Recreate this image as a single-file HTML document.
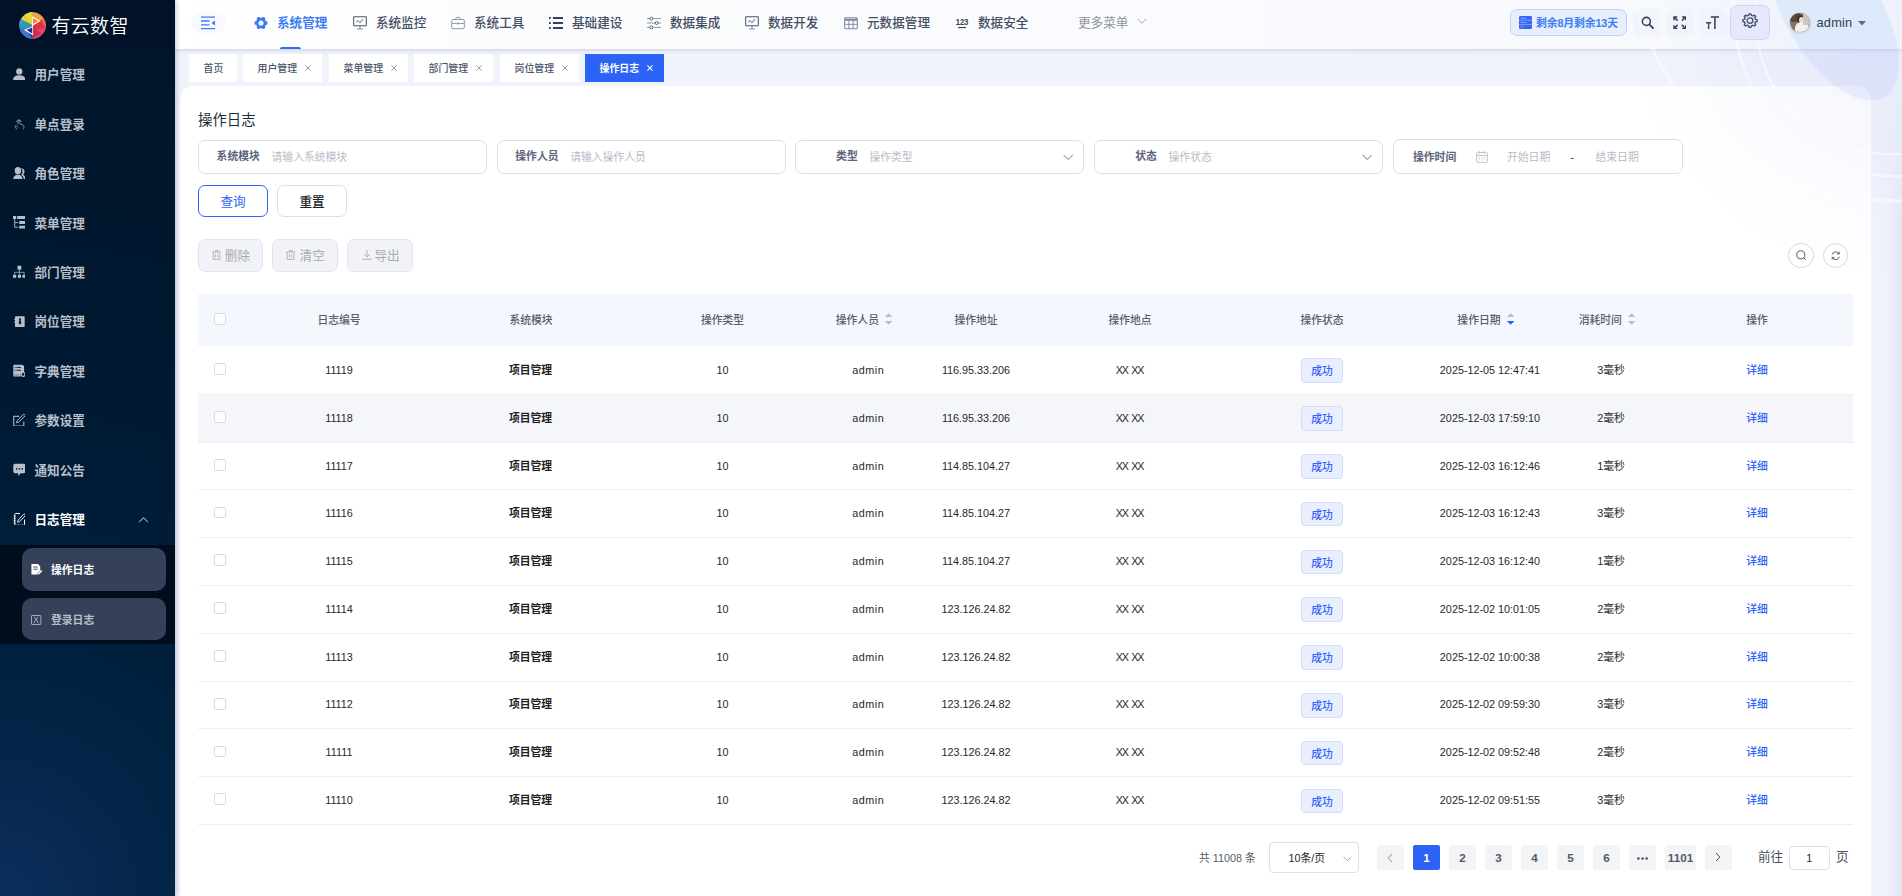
<!DOCTYPE html>
<html lang="zh-CN"><head><meta charset="utf-8"><title>操作日志</title><style>
*{box-sizing:border-box;margin:0;padding:0}
html,body{width:1902px;height:896px;overflow:hidden}
body{font-family:"Liberation Sans","Noto Sans CJK SC",sans-serif;font-size:10.8px;color:#303133;background:#f0f3fb;position:relative;-webkit-font-smoothing:antialiased}
.abs{position:absolute}
#side{position:absolute;left:0;top:0;width:175px;height:896px;background:radial-gradient(circle farthest-corner at 0% 100%,#0b2e5d 0%,#042547 18%,#001f3d 30%,#001a33 55%,#00162c 85%,#00152a 100%);box-shadow:1px 0 5px rgba(0,21,41,.25);z-index:5}
#logo{position:absolute;left:0;top:0;width:175px;height:49px;background:#011228}
#logo .t{position:absolute;left:51.5px;top:12.3px;font-size:19px;line-height:30px;font-weight:350;color:#fff;letter-spacing:.3px;white-space:nowrap}
.mi{position:absolute;left:0;width:175px;height:49.44px;line-height:49.44px;color:#b7bfca;font-weight:700;font-size:12.6px;white-space:nowrap}
.mi span{position:absolute;left:34.5px;top:0}
.mi svg{position:absolute;left:12.8px;top:16.5px;width:12.6px;height:12.6px}
.mi.on{color:#fff}
#sub{position:absolute;left:0;top:544.5px;width:175px;height:99px;background:#000d1c}
.si{position:absolute;left:22px;width:144px;height:42px;border-radius:10px;background:#344158;color:#b7bfca;font-weight:700;font-size:10.8px;line-height:42px}
.si span{position:absolute;left:29px;top:0}
.si svg{position:absolute;left:8.2px;top:14.6px;width:12px;height:12px}
.si.on{color:#fff}
#topbg{position:absolute;left:175px;top:0;width:1727px;height:49px;background:linear-gradient(90deg,#fff 0%,#fbfcfe 20%,#f8f9fd 100%);box-shadow:0 1px 4px rgba(120,135,170,.35)}
#top{position:absolute;left:175px;top:0;width:1727px;height:49px}
.ni{position:absolute;top:0;height:49px;line-height:46px;font-size:12.6px;font-weight:500;color:#434e64;white-space:nowrap}
.ni svg{position:absolute;left:0;top:16px;width:14px;height:14px}
.ni span{position:absolute;left:23px;top:0}
#tags{position:absolute;left:175px;top:49px;width:1727px;height:37px}
.tag{position:absolute;top:5px;height:28px;background:#fff;font-size:9.9px;line-height:30.5px;color:#4b5467;font-weight:500;white-space:nowrap}
.tag span{position:absolute;top:0}
.tag i{position:absolute;top:-1.2px;font-style:normal;font-weight:400;font-size:10px;color:#8a909c}
.tag.on{background:#2d62f7;color:#fff;font-weight:700}
.tag.on i{color:#fff}
#card{position:absolute;left:180px;top:86px;width:1691px;height:820px;background:#fff;border-radius:14px 14px 0 0}
#ttl{position:absolute;left:198px;top:109px;font-size:14.4px;line-height:22px;color:#1f2a3a;font-weight:400}
.inp{position:absolute;top:140px;width:289px;height:34px;border:1px solid #dcdfea;border-radius:7px;background:#fff}
.inp b{position:absolute;top:0;line-height:31px;font-size:10.8px;color:#5d647c;font-weight:700;white-space:nowrap}
.inp em{position:absolute;top:0;left:72.4px;line-height:33.2px;font-size:10.8px;color:#b8bcc6;font-style:normal;white-space:nowrap}
.btn{position:absolute;border-radius:7px;text-align:center;font-size:12.6px;white-space:nowrap}
.dis{position:absolute;top:239.3px;height:32.4px;border:1px solid #e3e5ee;background:#f2f3f8;border-radius:7px;color:#a6a9b3;font-size:12.6px;line-height:33.4px;white-space:nowrap}
.circ{position:absolute;top:242.6px;width:25.6px;height:25.6px;border-radius:50%;border:1px solid #d7d9e2;background:#fff}
#thead{position:absolute;left:198px;top:294px;width:1655px;height:52.3px;background:#f4f7fe}
.th{position:absolute;top:294.5px;height:52.5px;line-height:50.6px;font-size:10.8px;font-weight:500;color:#585d69;white-space:nowrap;transform:translateX(-50%)}
.row{position:absolute;left:198px;width:1655px;height:47.8px;border-bottom:1px solid #eceff5}
.row.hv{background:#f5f6fa}
.td{position:absolute;height:47.78px;line-height:46.5px;font-size:10.8px;color:#25282e;white-space:nowrap;transform:translateX(-50%)}
.td.b{font-weight:700;color:#1d2026}
.td.l{color:#2d62f7;font-weight:500}
.cb{position:absolute;left:214.1px;width:11.8px;height:11.8px;border:1px solid #d9dce6;border-radius:2px;background:#fff}
.ok{position:absolute;left:1301px;width:42px;height:24.5px;border:1px solid #d2dcfd;border-radius:4px;background:#eaeffe;color:#2f63f9;font-weight:500;font-size:10.8px;line-height:25.2px;text-align:center}
.pg{position:absolute;top:845px;height:25px;min-width:27px;background:#f3f4f6;border-radius:2px;text-align:center;line-height:25px;font-size:11.7px;font-weight:700;color:#555963}
.pg.on{background:#2d62f7;color:#fff;font-weight:700}
</style></head><body>
<div id="card"></div>
<div class="abs" style="left:1880px;top:49px;width:22px;height:847px;background:linear-gradient(90deg,rgba(205,210,228,0) 0,rgba(205,210,225,.08) 45%,rgba(203,207,222,.40) 100%);-webkit-mask-image:linear-gradient(180deg,transparent 30px,#000 220px);mask-image:linear-gradient(180deg,transparent 30px,#000 220px)"></div>
<div id="topbg"></div>
<div class="abs" style="left:1480px;top:0;width:422px;height:420px;overflow:hidden;pointer-events:none"><div class="abs" style="left:142px;top:-280px;width:560px;height:560px;border-radius:50%;background:radial-gradient(closest-side,rgba(200,212,250,.20) 0,rgba(200,212,250,.15) 50%,rgba(205,215,250,.05) 80%,rgba(205,215,250,0) 100%)"></div><div class="abs" style="left:275.0px;top:-115.0px;width:270.0px;height:270.0px;border-radius:50%;border:2.5px solid rgba(255,255,255,0.55)"></div><div class="abs" style="left:252.0px;top:-158.0px;width:336.0px;height:336.0px;border-radius:50%;border:3.0px solid rgba(255,255,255,0.45)"></div><div class="abs" style="left:147.0px;top:-323.0px;width:526.0px;height:526.0px;border-radius:50%;border:4.0px solid rgba(255,255,255,0.40)"></div></div>
<div class="abs" style="left:1480px;top:0;width:422px;height:49px;overflow:hidden;pointer-events:none"><div class="abs" style="left:255.8px;top:-34.4px;width:196px;height:95px;border-radius:50%;transform:rotate(58.800deg);background:rgba(150,200,250,.20)"></div></div>
<div class="abs" style="left:1480px;top:49px;width:422px;height:300px;overflow:hidden;pointer-events:none"><div class="abs" style="left:255.8px;top:-83.4px;width:196px;height:95px;border-radius:50%;transform:rotate(58.800deg);background:rgba(170,180,250,.19)"></div></div>
<div id="side">
<div id="logo">
<svg class="abs" style="left:19px;top:12px;width:27px;height:27px" viewBox="0 0 54 54">
<defs><clipPath id="lc"><circle cx="27" cy="27" r="26.500"/></clipPath></defs>
<g clip-path="url(#lc)">
<rect width="54" height="54" fill="#3f76c9"/>
<path d="M0 0h27v27L2 14z" fill="#e3cf3d"/>
<path d="M8 0h19v24z" fill="#ecd93f"/>
<path d="M0 13l27 13-12 8L0 30z" fill="#2f9ba8"/>
<path d="M0 12l10 5-9 9z" fill="#3e9fe0"/>
<path d="M0 30l15 4 12 20H8z" fill="#4277c8"/>
<path d="M14 34l13-7v27z" fill="#25379a"/>
<path d="M27 0h27v20L27 22z" fill="#f2a33b"/>
<path d="M27 0h12l15 14V0z" fill="#f4b94c"/>
<path d="M27 20l27-6v22L27 40z" fill="#e2333c"/>
<path d="M44 14l10 0v22z" fill="#ee5f5a"/>
<path d="M27 36l27-4v22H27z" fill="#e8456a"/>
<path d="M27 30l17 12-17 12z" fill="#c92e55"/>
</g>
<path d="M27 9v37" stroke="#fff" stroke-width="2.200" fill="none"/>
<path d="M27.500 10.500l13.500 7.500-13 7.500" stroke="#fff" stroke-width="2.400" fill="#ea8a1f" stroke-linejoin="miter"/>
<path d="M26.500 29.500l-14 6.500 14 8.500" stroke="#fff" stroke-width="2.400" fill="#1b2a8f" stroke-linejoin="miter"/>
</svg>
<div class="t">有云数智</div>
</div>
<div class="mi" style="top:51.20px"><svg viewBox="0 0 12.6 12.6" style="" ><ellipse cx="6.300" cy="3.400" rx="3.100" ry="3.200" fill="currentColor"/><path d="M.1 12.300c0-3.600 2.600-5 6.200-5s6.200 1.400 6.200 5z" fill="currentColor"/></svg><span>用户管理</span></div>
<div class="mi" style="top:100.64px"><svg viewBox="0 0 12.6 12.6" style="" ><g opacity=".75"><path d="M5 7.500V3.600a.9.900 0 011.800 0v3.200l3.300 1.300c.8.300 1 .8.900 1.500l-.5 2.700M3.600 12.300L2.100 9.400c-.3-.8.700-1.300 1.300-.7L5 10.300" fill="none" stroke="currentColor" stroke-width=".9"/><path d="M3.400 5a2.600 2.600 0 015 0" fill="none" stroke="currentColor" stroke-width=".9"/></g></svg><span>单点登录</span></div>
<div class="mi" style="top:150.08px"><svg viewBox="0 0 12.6 12.6" style="" ><ellipse cx="4.900" cy="3.700" rx="3.200" ry="3.600" fill="currentColor"/><path d="M.2 12.200c.2-2.400 1.500-3.700 3.200-4.400h3c1.700.7 3 2 3.200 4.400z" fill="currentColor"/><path d="M8 1.300c2.200.1 3.500 1.500 3.500 3.500 0 1.300-.6 2.300-1.400 2.900 1.500.8 2.400 2.300 2.500 4.500h-1.800c-.2-2-1.100-3.300-2.700-4.100.9-.9 1.400-1.900 1.400-3.300 0-1.400-.5-2.600-1.500-3.500z" fill="currentColor"/></svg><span>角色管理</span></div>
<div class="mi" style="top:199.52px"><svg viewBox="0 0 12.6 12.6" style="" ><path d="M0 .1h3.200v2.800H0zM4.200.1h8.500v2.800H4.200zM6.200 5.100h6.500v2.900H6.200zM6.200 9.700h6.500v2.900H6.200z" fill="currentColor"/><path d="M1.700 2.900v8.400h3.500M1.700 6.600h3.500" fill="none" stroke="currentColor" stroke-width=".9"/></svg><span>菜单管理</span></div>
<div class="mi" style="top:248.96px"><svg viewBox="0 0 12.6 12.6" style="" ><path d="M4.500.8h3.800v3.900H4.500zM0 9.700h3.200v3H0zM4.900 9.700h3.200v3H4.900zM9.500 9.700h3.200v3H9.500z" fill="currentColor"/><path d="M6.400 4.700v5M1.600 9.700V7.300h9.500v2.400" fill="none" stroke="currentColor" stroke-width=".9" opacity=".8"/></svg><span>部门管理</span></div>
<div class="mi" style="top:298.40px"><svg viewBox="0 0 12.6 12.6" style="" ><rect x="2" y="1.300" width="9.700" height="10.700" rx=".8" fill="currentColor"/><path d="M1 4.600h1.500M1 7.200h1.500" stroke="currentColor" stroke-width=".9"/><path d="M6.200 3.200h1.600l.3 1-.5.800.8 3-1.400 1.800L5.600 8l.8-3-.5-.8z" fill="#001a36"/></svg><span>岗位管理</span></div>
<div class="mi" style="top:347.84px"><svg viewBox="0 0 12.6 12.6" style="" ><path d="M.3 1.600a.8.800 0 01.8-.8h8.200l1.800 1.200v6a3.300 3.300 0 00-3.300 4.600H1.100a.8.800 0 01-.8-.8z" fill="currentColor"/><path d="M1.500 3.400h1M3.400 3.400h4.600M1.500 6.200h1M3.400 6.200h4.600" stroke="#0b2444" stroke-width="1"/><path d="M1.500 11h5" stroke="#5b6b80" stroke-width=".8"/><circle cx="10.100" cy="10.400" r="1.900" fill="none" stroke="currentColor" stroke-width="1.200"/></svg><span>字典管理</span></div>
<div class="mi" style="top:397.28px"><svg viewBox="0 0 12.6 12.6" style="" ><path d="M10.800 7.500v4.700H.7V2.300h5.600" fill="none" stroke="currentColor" stroke-width="1.200" opacity=".85"/><path d="M3.500 8.600l.7-2L10.300.5a1.100 1.100 0 011.700 1.500L5.700 8.100z" fill="none" stroke="currentColor" stroke-width="1"/></svg><span>参数设置</span></div>
<div class="mi" style="top:446.72px"><svg viewBox="0 0 12.6 12.6" style="" ><path d="M2 .8h8.800A1.700 1.700 0 0112.500 2.500v6A1.700 1.700 0 0110.800 10.200H7.500L5.600 12.900 5 10.200H2A1.700 1.700 0 01.3 8.500v-6A1.700 1.700 0 012 .8z" fill="currentColor"/><circle cx="3.700" cy="5.900" r=".8" fill="#001a36"/><circle cx="6.500" cy="5.900" r=".8" fill="#001a36"/><circle cx="9.300" cy="5.900" r=".8" fill="#001a36"/></svg><span>通知公告</span></div>
<div class="mi on" style="top:496.16px"><svg viewBox="0 0 12.6 12.6" style="" ><path d="M11.500 6.500v5a.8.800 0 01-.8.800H2.600a.8.800 0 01-.8-.8V1.300a.8.800 0 01.8-.8H7" fill="none" stroke="currentColor" stroke-width="1"/><path d="M.6 3.200h1.900M.6 5.500h1.900M.6 7.800h1.900M.6 10.100h1.900" stroke="currentColor" stroke-width=".8"/><path d="M4.700 9.300l.4-2.100L10.500 1.400a1.100 1.100 0 011.600 1.500L6.700 8.500z" fill="none" stroke="currentColor" stroke-width=".9"/></svg><span>日志管理</span></div>
<svg class="abs" style="left:138px;top:515.5px;width:11px;height:8px" viewBox="0 0 11 8"><path d="M1 6.200l4.500-4.400 4.500 4.400" fill="none" stroke="#8f98a8" stroke-width="1.100"/></svg>
<div id="sub"></div>
<div class="si on" style="top:548px;height:42.800px;line-height:44px"><svg viewBox="0 0 12.6 12.6" style="" ><path d="M1.500 1h6.800l2.400 2.400v4.400L8 10.500v1.500H1.500z" fill="currentColor"/><path d="M3.500 4.200h4.500M3.500 6.500h4.500" stroke="#344158" stroke-width="1"/><path d="M8.200 12l.3-1.500 3.200-3.200 1.200 1.200-3.200 3.200z" fill="currentColor"/></svg><span>操作日志</span></div>
<div class="si" style="top:598.100px;line-height:44.600px"><svg viewBox="0 0 12.6 12.6" style="top:16.300px" ><rect x="1.600" y="1.600" width="9.800" height="9.400" rx=".6" fill="none" stroke="currentColor" stroke-width=".9"/><path d="M4 9.600l2.500-4.300L9 9.600M4.300 3.400l2.200 1.900 2.200-1.900" fill="none" stroke="currentColor" stroke-width=".9"/></svg><span>登录日志</span></div>
</div>
<div id="top">
<div class="abs" style="left:16px;top:13px;width:35px;height:20px;border-radius:10px;background:#f8f9fe"></div>
<svg class="abs" style="left:26px;top:16px;width:14px;height:14px" viewBox="0 0 14 14"><path d="M0 1.200h14M0 5h8.500M0 8.800h8.500M0 12.600h14" stroke="#3b7cf5" stroke-width="1.300"/><path d="M14 4.500v5L10.500 7z" fill="#3b7cf5"/></svg>
<div class="ni" style="left:79px;color:#3b7cf5;font-weight:700"><svg viewBox="0 0 16 16" style="" ><g fill="#3b7cf5"><circle cx="8" cy="8" r="5.9"/><circle cx="13.20" cy="8.00" r="2.35"/><circle cx="10.60" cy="12.50" r="2.35"/><circle cx="5.40" cy="12.50" r="2.35"/><circle cx="2.80" cy="8.00" r="2.35"/><circle cx="5.40" cy="3.50" r="2.35"/><circle cx="10.60" cy="3.50" r="2.35"/></g><circle cx="8" cy="8" r="2.9" fill="#fcfcff"/></svg><span>系统管理</span></div>
<div class="ni" style="left:178px"><svg viewBox="0 0 16 16" style="" ><rect x=".8" y=".8" width="14.400" height="10.400" rx=".6" fill="none" stroke="#4a566c" stroke-width="1.200"/><path d="M8 11v3.500M4.500 14.800h7" stroke="#8a93a6" stroke-width="1.200"/><path d="M3.800 7l2-1.800 2 2.300 3.800-3.700" fill="none" stroke="#4a566c" stroke-width="1.100"/></svg><span>系统监控</span></div>
<div class="ni" style="left:276px"><svg viewBox="0 0 16 16" style="" ><rect x=".8" y="4" width="14.400" height="10.500" rx="1.500" fill="none" stroke="#8d96a8" stroke-width="1.100"/><path d="M5.500 4V2.500a.8.800 0 01.8-.8h3.400a.8.800 0 01.8.8V4M.8 8.500h5.700M9.500 8.500h5.700" fill="none" stroke="#8d96a8" stroke-width="1.100"/><rect x="6.800" y="7.500" width="2.400" height="2" fill="#8d96a8"/></svg><span>系统工具</span></div>
<div class="ni" style="left:374px"><svg viewBox="0 0 16 16" style="" ><path d="M4.500 1.200h11.500v2.200H4.500zM4.500 6.900h11.500v2.200H4.500zM4.500 12.600h11.500v2.200H4.500z" fill="#34405a"/><path d="M0 1.200h2v2.200H0zM0 6.900h2v2.200H0zM0 12.600h2v2.200H0z" fill="#34405a"/></svg><span>基础建设</span></div>
<div class="ni" style="left:472px"><svg viewBox="0 0 16 16" style="" ><path d="M0 3h16M0 8h16M0 13h16" stroke="#7f899b" stroke-width="1"/><circle cx="5" cy="3" r="1.700" fill="#fafbfe" stroke="#4a566c" stroke-width="1"/><circle cx="11" cy="8" r="1.700" fill="#fafbfe" stroke="#4a566c" stroke-width="1"/><circle cx="5" cy="13" r="1.700" fill="#fafbfe" stroke="#4a566c" stroke-width="1"/></svg><span>数据集成</span></div>
<div class="ni" style="left:570px"><svg viewBox="0 0 16 16" style="" ><rect x=".8" y=".8" width="14.400" height="10.400" rx=".6" fill="none" stroke="#4a566c" stroke-width="1.200"/><path d="M8 11v3.500M4.500 14.800h7" stroke="#8a93a6" stroke-width="1.200"/><path d="M3.800 7l2-1.800 2 2.300 3.800-3.700" fill="none" stroke="#4a566c" stroke-width="1.100"/></svg><span>数据开发</span></div>
<div class="ni" style="left:669px"><svg viewBox="0 0 16 16" style="" ><rect x=".8" y="2" width="14.400" height="12.500" rx=".8" fill="none" stroke="#7f899b" stroke-width="1.200"/><path d="M.8 4.300h14.400" stroke="#7f899b" stroke-width="2.400"/><path d="M.8 9.500h14.400M5.600 5v9.500M10.400 5v9.500" stroke="#7f899b" stroke-width="1.100"/></svg><span>元数据管理</span></div>
<div class="ni" style="left:780px"><svg viewBox="0 0 16 16" style="" ><text x="8" y="10.300" text-anchor="middle" font-family='"Liberation Sans",sans-serif' font-weight="700" font-size="10.500" fill="#34405a" textLength="14.500" lengthAdjust="spacingAndGlyphs">123</text><path d="M3.500 13.200h9" stroke="#34405a" stroke-width="1.300"/></svg><span>数据安全</span></div>
<div class="abs" style="left:105px;top:47px;width:21px;height:2px;border-radius:2px 2px 0 0;background:#2d6ff0"></div>
<div class="ni" style="left:903px;color:#8f949e;font-weight:400"><span style="left:0">更多菜单</span></div>
<svg class="abs" style="left:962px;top:18px;width:10px;height:7px" viewBox="0 0 10 7"><path d="M.8 1l4.200 4.200L9.200 1" fill="none" stroke="#a0a5ae" stroke-width="1"/></svg>
<div class="abs" style="left:1335px;top:9px;width:117px;height:27px;border:1px solid #bcd2fd;border-radius:7px;background:#e7eefc"></div>
<svg class="abs" style="left:1344px;top:16px;width:13px;height:13px" viewBox="0 0 13 13"><rect x="0" y="0" width="13" height="13" rx="1.200" fill="#3567f6"/><path d="M0 4.300h13M0 8.600h13" stroke="#7fa0fa" stroke-width=".9"/><path d="M1.500 2.200h6M1.500 6.500h6M1.500 10.800h3" stroke="#86a6fb" stroke-width="1"/></svg>
<div class="abs" style="left:1361px;top:9px;line-height:28px;font-size:10.8px;font-weight:700;color:#3b7cf5;white-space:nowrap;letter-spacing:-0.1px">剩余8月剩余13天</div>
<div class="abs" style="left:1458.0px;top:9px;width:28px;height:28px;border-radius:7px;background:rgba(236,240,250,.45)"></div><div class="abs" style="left:1490.5px;top:9px;width:28px;height:28px;border-radius:7px;background:rgba(236,240,250,.45)"></div><div class="abs" style="left:1523.5px;top:9px;width:28px;height:28px;border-radius:7px;background:rgba(236,240,250,.45)"></div>
<svg class="abs" style="left:1465.500px;top:16px;width:13px;height:13px" viewBox="0 0 14 14"><circle cx="5.800" cy="5.800" r="4.300" fill="none" stroke="#36425a" stroke-width="1.700"/><path d="M9 9l4 4" stroke="#36425a" stroke-width="1.900" stroke-linecap="round"/></svg>
<svg class="abs" style="left:1497.500px;top:15.500px;width:13.500px;height:13.500px" viewBox="0 0 14 14"><g fill="none" stroke="#36425a" stroke-width="1.500"><path d="M1 4.500V1h3.500M1.200 1.200l3.600 3.600M9.500 1H13v3.500M12.800 1.200L9.200 4.800M1 9.500V13h3.500M1.200 12.800l3.600-3.600M13 9.500V13H9.500M12.800 12.800L9.200 9.200"/></g></svg>
<svg class="abs" style="left:1530.500px;top:15.500px;width:13px;height:13px" viewBox="0 0 13 13"><path d="M4.800 1h8.200M8.900 1v12" stroke="#36425a" stroke-width="1.550" fill="none"/><path d="M0 6.800h5.200M2.600 6.800V13" stroke="#36425a" stroke-width="1.400" fill="none"/></svg>
<div class="abs" style="left:1555px;top:4.500px;width:40px;height:35.500px;border:1px solid #d9d1fb;border-radius:7px;background:#e5e9fb"></div>
<svg class="abs" style="left:1567px;top:13.300px;width:16px;height:15.200px" viewBox="0 0 16 16" preserveAspectRatio="none"><path d="M13.54 6.67L15.14 7.04L15.14 8.96L13.54 9.33L12.86 10.98L13.72 12.37L12.37 13.72L10.98 12.86L9.33 13.54L8.96 15.14L7.04 15.14L6.67 13.54L5.02 12.86L3.63 13.72L2.28 12.37L3.14 10.98L2.46 9.33L0.86 8.96L0.86 7.04L2.46 6.67L3.14 5.02L2.28 3.63L3.63 2.28L5.02 3.14L6.67 2.46L7.04 0.86L8.96 0.86L9.33 2.46L10.98 3.14L12.37 2.28L13.72 3.63L12.86 5.02z" fill="none" stroke="#46526a" stroke-width="1.400" stroke-linejoin="round"/><circle cx="8" cy="8" r="2.900" fill="none" stroke="#46526a" stroke-width="1.400"/></svg>
<div class="abs" style="left:1615.300px;top:12.500px;width:19.700px;height:19.700px;border-radius:50%;overflow:hidden;background:#8a6f5c;box-shadow:0 1px 3px rgba(60,70,100,.25)"><div class="abs" style="left:-2px;top:-3px;width:12px;height:12px;border-radius:50%;background:#5c4535"></div><div class="abs" style="left:7px;top:2px;width:8px;height:9px;border-radius:50%;background:#3d2f2a"></div><div class="abs" style="left:8.500px;top:4px;width:5px;height:6px;border-radius:50%;background:#ecd9cd"></div><div class="abs" style="left:5px;top:9px;width:14px;height:14px;border-radius:45%;background:#f4f1ee"></div><div class="abs" style="left:13px;top:0;width:8px;height:12px;background:#cfc6bb"></div></div>
<div class="abs" style="left:1641.500px;top:0;line-height:45px;font-size:12.800px;font-weight:500;color:#2f3a50;letter-spacing:.2px">admin</div>
<svg class="abs" style="left:1683px;top:20.500px;width:8px;height:5px" viewBox="0 0 8 5"><path d="M0 0h8L4 4.600z" fill="#5f6c85"/></svg>
</div>
<div id="tags">
<div class="tag" style="left:14px;width:48px"><span style="left:14.500px">首页</span></div>
<div class="tag" style="left:68px;width:79px"><span style="left:14.500px">用户管理</span><svg class="abs" style="left:62px;top:10.700px;width:6px;height:6px" viewBox="0 0 6 6"><path d="M.4.400l5.200 5.200M5.600.4L.4 5.600" stroke="#858b98" stroke-width=".85" fill="none"/></svg></div>
<div class="tag" style="left:154px;width:79px"><span style="left:14.500px">菜单管理</span><svg class="abs" style="left:62px;top:10.700px;width:6px;height:6px" viewBox="0 0 6 6"><path d="M.4.400l5.200 5.200M5.600.4L.4 5.600" stroke="#858b98" stroke-width=".85" fill="none"/></svg></div>
<div class="tag" style="left:239px;width:79px"><span style="left:14.500px">部门管理</span><svg class="abs" style="left:62px;top:10.700px;width:6px;height:6px" viewBox="0 0 6 6"><path d="M.4.400l5.200 5.200M5.600.4L.4 5.600" stroke="#858b98" stroke-width=".85" fill="none"/></svg></div>
<div class="tag" style="left:325px;width:79px"><span style="left:14.500px">岗位管理</span><svg class="abs" style="left:62px;top:10.700px;width:6px;height:6px" viewBox="0 0 6 6"><path d="M.4.400l5.200 5.200M5.600.4L.4 5.600" stroke="#858b98" stroke-width=".85" fill="none"/></svg></div>
<div class="tag on" style="left:410px;width:79px"><span style="left:14.500px">操作日志</span><svg class="abs" style="left:62px;top:10.700px;width:6px;height:6px" viewBox="0 0 6 6"><path d="M.4.400l5.200 5.200M5.600.4L.4 5.600" stroke="#fff" stroke-width="1.100" fill="none"/></svg></div>
</div>
<div id="ttl">操作日志</div>
<div class="inp" style="left:198.2px"><b style="right:226.4px">系统模块</b><em style="left:72.4px">请输入系统模块</em></div>
<div class="inp" style="left:496.9px"><b style="right:226.4px">操作人员</b><em style="left:72.4px">请输入操作人员</em></div>
<div class="inp" style="left:795.1px"><b style="right:225.4px">类型</b><em style="left:73.4px">操作类型</em><svg class="abs" style="left:266.800px;top:12.500px;width:10.500px;height:7px" viewBox="0 0 10.500 7"><path d="M.7 1l4.550 4.500L9.800 1" fill="none" stroke="#a4a8b3" stroke-width="1.100"/></svg></div>
<div class="inp" style="left:1094.2px"><b style="right:225.4px">状态</b><em style="left:73.4px">操作状态</em><svg class="abs" style="left:266.800px;top:12.500px;width:10.500px;height:7px" viewBox="0 0 10.500 7"><path d="M.7 1l4.550 4.500L9.800 1" fill="none" stroke="#a4a8b3" stroke-width="1.100"/></svg></div>
<div class="inp" style="left:1393px;top:139.300px;height:34.500px;width:289.800px"><b style="left:19px;top:1.500px">操作时间</b><svg class="abs" style="left:82px;top:10.500px;width:12px;height:12px" viewBox="0 0 12 12"><rect x=".6" y="1.600" width="10.800" height="9.800" rx=".8" fill="none" stroke="#c0c4d0" stroke-width="1"/><path d="M.6 4.500h10.800M3.300 0v2.500M8.700 0v2.500" stroke="#c0c4d0" stroke-width="1"/><path d="M2.800 6.600h1.200M5.400 6.600h1.200M8 6.600h1.200M2.800 8.800h1.200M5.400 8.800h1.200M8 8.800h1.200" stroke="#c0c4d0" stroke-width="1"/></svg><em style="left:113px;top:1px">开始日期</em><em style="left:176.500px;top:1px;color:#303133">-</em><em style="left:201.500px;top:1px">结束日期</em></div>
<div class="btn" style="left:198px;top:185px;width:70px;height:32px;border:1.200px solid #2f63f9;color:#2f63f9;line-height:33px;background:#fff">查询</div>
<div class="btn" style="left:277px;top:185px;width:70px;height:32px;border:1px solid #dcdfee;color:#1f2329;line-height:33.500px;font-weight:500;background:#fff">重置</div>
<div class="dis" style="left:198px;width:65px"><svg class="abs" style="left:12.600px;top:9.800px;width:9.200px;height:10px" viewBox="0 0 10 11"><path d="M0 2.300h10M3.300 2V.6h3.400V2M1.300 2.500v7.900h7.400V2.500M3.800 4.500v4M6.200 4.500v4" fill="none" stroke="#a6a9b3" stroke-width=".9"/></svg><span class="abs" style="left:25.800px">删除</span></div>
<div class="dis" style="left:272px;width:66px"><svg class="abs" style="left:12.600px;top:9.800px;width:9.200px;height:10px" viewBox="0 0 10 11"><path d="M0 2.300h10M3.300 2V.6h3.400V2M1.300 2.500v7.900h7.400V2.500M3.800 4.500v4M6.200 4.500v4" fill="none" stroke="#a6a9b3" stroke-width=".9"/></svg><span class="abs" style="left:26.600px">清空</span></div>
<div class="dis" style="left:347px;width:66px"><svg class="abs" style="left:14px;top:10px;width:10px;height:10px" viewBox="0 0 10 10"><path d="M.5 9.200h9M5 .5v6.300M2.300 4.300L5 7l2.700-2.700" fill="none" stroke="#a6a9b3" stroke-width=".9"/></svg><span class="abs" style="left:26.500px">导出</span></div>
<div class="circ" style="left:1788.200px"><svg class="abs" style="left:6.800px;top:6.600px;width:10.500px;height:10.500px" viewBox="0 0 12 12"><circle cx="5.500" cy="5.500" r="4.600" fill="none" stroke="#3a3f4a" stroke-width="1"/><path d="M8.800 8.800l2.400 2.400" stroke="#3a3f4a" stroke-width="1"/></svg></div>
<div class="circ" style="left:1822.800px"><svg class="abs" style="left:7.400px;top:7.200px;width:9.400px;height:9.400px" viewBox="0 0 11 11"><path d="M1.300 4.300A4.300 4.300 0 019.300 3.200M9.700 6.700A4.300 4.300 0 011.700 7.800" fill="none" stroke="#3a3f4a" stroke-width="1"/><path d="M9.600 1v2.500H7.100M1.400 10V7.500h2.500" fill="none" stroke="#3a3f4a" stroke-width="1"/></svg></div>
<div id="thead"></div>
<div class="cb" style="top:313.100px"></div>
<div class="th" style="left:339.0px">日志编号</div>
<div class="th" style="left:531.0px">系统模块</div>
<div class="th" style="left:722.5px">操作类型</div>
<div class="th" style="left:864.4px">操作人员<svg style="display:inline-block;vertical-align:middle;margin:-2.700px 0 0 5.500px;width:8.600px;height:12px" viewBox="0 0 8 12" preserveAspectRatio="none"><path d="M4 .2l3.600 3.800H.4z" fill="#b9bdc7"/><path d="M4 11.800l3.600-3.800H.4z" fill="#b9bdc7"/></svg></div>
<div class="th" style="left:976.0px">操作地址</div>
<div class="th" style="left:1130.0px">操作地点</div>
<div class="th" style="left:1322.0px">操作状态</div>
<div class="th" style="left:1486.0px">操作日期<svg style="display:inline-block;vertical-align:middle;margin:-2.700px 0 0 5.500px;width:8.600px;height:12px" viewBox="0 0 8 12" preserveAspectRatio="none"><path d="M4 .2l3.600 3.800H.4z" fill="#b9bdc7"/><path d="M4 11.800l3.600-3.800H.4z" fill="#2d62f7"/></svg></div>
<div class="th" style="left:1607.3px">消耗时间<svg style="display:inline-block;vertical-align:middle;margin:-2.700px 0 0 5.500px;width:8.600px;height:12px" viewBox="0 0 8 12" preserveAspectRatio="none"><path d="M4 .2l3.600 3.800H.4z" fill="#b9bdc7"/><path d="M4 11.800l3.600-3.800H.4z" fill="#b9bdc7"/></svg></div>
<div class="th" style="left:1757.0px">操作</div>
<div class="row" style="top:347.10px"></div>
<div class="cb" style="top:363.20px"></div>
<div class="td" style="left:339.0px;top:346.95px">11119</div>
<div class="td b" style="left:530.5px;top:346.95px">项目管理</div>
<div class="td" style="left:722.5px;top:346.95px">10</div>
<div class="td" style="left:868.3px;top:346.95px"><span style="letter-spacing:.55px">admin</span></div>
<div class="td" style="left:976.0px;top:346.95px">116.95.33.206</div>
<div class="td" style="left:1129.5px;top:346.95px"><span style="letter-spacing:-1.300px;word-spacing:2px">XX XX</span></div>
<div class="ok" style="top:358.40px">成功</div>
<div class="td" style="left:1490.0px;top:346.95px">2025-12-05 12:47:41</div>
<div class="td" style="left:1611.0px;top:346.95px">3毫秒</div>
<div class="td l" style="left:1757.0px;top:346.95px">详细</div>
<div class="row hv" style="top:394.90px"></div>
<div class="cb" style="top:411.00px"></div>
<div class="td" style="left:339.0px;top:394.73px">11118</div>
<div class="td b" style="left:530.5px;top:394.73px">项目管理</div>
<div class="td" style="left:722.5px;top:394.73px">10</div>
<div class="td" style="left:868.3px;top:394.73px"><span style="letter-spacing:.55px">admin</span></div>
<div class="td" style="left:976.0px;top:394.73px">116.95.33.206</div>
<div class="td" style="left:1129.5px;top:394.73px"><span style="letter-spacing:-1.300px;word-spacing:2px">XX XX</span></div>
<div class="ok" style="top:406.20px">成功</div>
<div class="td" style="left:1490.0px;top:394.73px">2025-12-03 17:59:10</div>
<div class="td" style="left:1611.0px;top:394.73px">2毫秒</div>
<div class="td l" style="left:1757.0px;top:394.73px">详细</div>
<div class="row" style="top:442.70px"></div>
<div class="cb" style="top:458.80px"></div>
<div class="td" style="left:339.0px;top:442.51px">11117</div>
<div class="td b" style="left:530.5px;top:442.51px">项目管理</div>
<div class="td" style="left:722.5px;top:442.51px">10</div>
<div class="td" style="left:868.3px;top:442.51px"><span style="letter-spacing:.55px">admin</span></div>
<div class="td" style="left:976.0px;top:442.51px">114.85.104.27</div>
<div class="td" style="left:1129.5px;top:442.51px"><span style="letter-spacing:-1.300px;word-spacing:2px">XX XX</span></div>
<div class="ok" style="top:454.00px">成功</div>
<div class="td" style="left:1490.0px;top:442.51px">2025-12-03 16:12:46</div>
<div class="td" style="left:1611.0px;top:442.51px">1毫秒</div>
<div class="td l" style="left:1757.0px;top:442.51px">详细</div>
<div class="row" style="top:490.50px"></div>
<div class="cb" style="top:506.60px"></div>
<div class="td" style="left:339.0px;top:490.29px">11116</div>
<div class="td b" style="left:530.5px;top:490.29px">项目管理</div>
<div class="td" style="left:722.5px;top:490.29px">10</div>
<div class="td" style="left:868.3px;top:490.29px"><span style="letter-spacing:.55px">admin</span></div>
<div class="td" style="left:976.0px;top:490.29px">114.85.104.27</div>
<div class="td" style="left:1129.5px;top:490.29px"><span style="letter-spacing:-1.300px;word-spacing:2px">XX XX</span></div>
<div class="ok" style="top:501.80px">成功</div>
<div class="td" style="left:1490.0px;top:490.29px">2025-12-03 16:12:43</div>
<div class="td" style="left:1611.0px;top:490.29px">3毫秒</div>
<div class="td l" style="left:1757.0px;top:490.29px">详细</div>
<div class="row" style="top:538.30px"></div>
<div class="cb" style="top:554.40px"></div>
<div class="td" style="left:339.0px;top:538.07px">11115</div>
<div class="td b" style="left:530.5px;top:538.07px">项目管理</div>
<div class="td" style="left:722.5px;top:538.07px">10</div>
<div class="td" style="left:868.3px;top:538.07px"><span style="letter-spacing:.55px">admin</span></div>
<div class="td" style="left:976.0px;top:538.07px">114.85.104.27</div>
<div class="td" style="left:1129.5px;top:538.07px"><span style="letter-spacing:-1.300px;word-spacing:2px">XX XX</span></div>
<div class="ok" style="top:549.60px">成功</div>
<div class="td" style="left:1490.0px;top:538.07px">2025-12-03 16:12:40</div>
<div class="td" style="left:1611.0px;top:538.07px">1毫秒</div>
<div class="td l" style="left:1757.0px;top:538.07px">详细</div>
<div class="row" style="top:586.10px"></div>
<div class="cb" style="top:602.20px"></div>
<div class="td" style="left:339.0px;top:585.85px">11114</div>
<div class="td b" style="left:530.5px;top:585.85px">项目管理</div>
<div class="td" style="left:722.5px;top:585.85px">10</div>
<div class="td" style="left:868.3px;top:585.85px"><span style="letter-spacing:.55px">admin</span></div>
<div class="td" style="left:976.0px;top:585.85px">123.126.24.82</div>
<div class="td" style="left:1129.5px;top:585.85px"><span style="letter-spacing:-1.300px;word-spacing:2px">XX XX</span></div>
<div class="ok" style="top:597.40px">成功</div>
<div class="td" style="left:1490.0px;top:585.85px">2025-12-02 10:01:05</div>
<div class="td" style="left:1611.0px;top:585.85px">2毫秒</div>
<div class="td l" style="left:1757.0px;top:585.85px">详细</div>
<div class="row" style="top:633.90px"></div>
<div class="cb" style="top:650.00px"></div>
<div class="td" style="left:339.0px;top:633.63px">11113</div>
<div class="td b" style="left:530.5px;top:633.63px">项目管理</div>
<div class="td" style="left:722.5px;top:633.63px">10</div>
<div class="td" style="left:868.3px;top:633.63px"><span style="letter-spacing:.55px">admin</span></div>
<div class="td" style="left:976.0px;top:633.63px">123.126.24.82</div>
<div class="td" style="left:1129.5px;top:633.63px"><span style="letter-spacing:-1.300px;word-spacing:2px">XX XX</span></div>
<div class="ok" style="top:645.20px">成功</div>
<div class="td" style="left:1490.0px;top:633.63px">2025-12-02 10:00:38</div>
<div class="td" style="left:1611.0px;top:633.63px">2毫秒</div>
<div class="td l" style="left:1757.0px;top:633.63px">详细</div>
<div class="row" style="top:681.70px"></div>
<div class="cb" style="top:697.80px"></div>
<div class="td" style="left:339.0px;top:681.41px">11112</div>
<div class="td b" style="left:530.5px;top:681.41px">项目管理</div>
<div class="td" style="left:722.5px;top:681.41px">10</div>
<div class="td" style="left:868.3px;top:681.41px"><span style="letter-spacing:.55px">admin</span></div>
<div class="td" style="left:976.0px;top:681.41px">123.126.24.82</div>
<div class="td" style="left:1129.5px;top:681.41px"><span style="letter-spacing:-1.300px;word-spacing:2px">XX XX</span></div>
<div class="ok" style="top:693.00px">成功</div>
<div class="td" style="left:1490.0px;top:681.41px">2025-12-02 09:59:30</div>
<div class="td" style="left:1611.0px;top:681.41px">3毫秒</div>
<div class="td l" style="left:1757.0px;top:681.41px">详细</div>
<div class="row" style="top:729.50px"></div>
<div class="cb" style="top:745.60px"></div>
<div class="td" style="left:339.0px;top:729.19px">11111</div>
<div class="td b" style="left:530.5px;top:729.19px">项目管理</div>
<div class="td" style="left:722.5px;top:729.19px">10</div>
<div class="td" style="left:868.3px;top:729.19px"><span style="letter-spacing:.55px">admin</span></div>
<div class="td" style="left:976.0px;top:729.19px">123.126.24.82</div>
<div class="td" style="left:1129.5px;top:729.19px"><span style="letter-spacing:-1.300px;word-spacing:2px">XX XX</span></div>
<div class="ok" style="top:740.80px">成功</div>
<div class="td" style="left:1490.0px;top:729.19px">2025-12-02 09:52:48</div>
<div class="td" style="left:1611.0px;top:729.19px">2毫秒</div>
<div class="td l" style="left:1757.0px;top:729.19px">详细</div>
<div class="row" style="top:777.30px"></div>
<div class="cb" style="top:793.40px"></div>
<div class="td" style="left:339.0px;top:776.97px">11110</div>
<div class="td b" style="left:530.5px;top:776.97px">项目管理</div>
<div class="td" style="left:722.5px;top:776.97px">10</div>
<div class="td" style="left:868.3px;top:776.97px"><span style="letter-spacing:.55px">admin</span></div>
<div class="td" style="left:976.0px;top:776.97px">123.126.24.82</div>
<div class="td" style="left:1129.5px;top:776.97px"><span style="letter-spacing:-1.300px;word-spacing:2px">XX XX</span></div>
<div class="ok" style="top:788.60px">成功</div>
<div class="td" style="left:1490.0px;top:776.97px">2025-12-02 09:51:55</div>
<div class="td" style="left:1611.0px;top:776.97px">3毫秒</div>
<div class="td l" style="left:1757.0px;top:776.97px">详细</div>
<div class="abs" style="left:1199px;top:845px;line-height:26px;font-size:10.800px;color:#5a5e66;white-space:nowrap">共 11008 条</div>
<div class="abs" style="left:1269px;top:842px;width:90px;height:30.500px;border:1px solid #dcdfe8;border-radius:4px;background:#fff"><span class="abs" style="left:18.500px;top:0;line-height:30.500px;font-size:10.800px;color:#25282e;white-space:nowrap">10条/页</span><svg class="abs" style="left:73px;top:12.500px;width:9px;height:6px" viewBox="0 0 9 6"><path d="M.6.800l3.900 3.900L8.400.8" fill="none" stroke="#a4a8b3" stroke-width="1"/></svg></div>
<div class="pg" style="left:1377px"><svg class="abs" style="left:10px;top:7.500px;width:6px;height:10px" viewBox="0 0 6 10"><path d="M5 1L1.200 5 5 9" fill="none" stroke="#b0b4bd" stroke-width="1.100"/></svg></div>
<div class="pg on" style="left:1413px">1</div>
<div class="pg" style="left:1449px">2</div>
<div class="pg" style="left:1485px">3</div>
<div class="pg" style="left:1521px">4</div>
<div class="pg" style="left:1557px">5</div>
<div class="pg" style="left:1593px">6</div>
<div class="pg" style="left:1629px"><svg class="abs" style="left:8px;top:11.800px;width:11px;height:3px" viewBox="0 0 11 3"><circle cx="1.400" cy="1.500" r="1.250" fill="#4a4e57"/><circle cx="5.500" cy="1.500" r="1.250" fill="#4a4e57"/><circle cx="9.600" cy="1.500" r="1.250" fill="#4a4e57"/></svg></div>
<div class="pg" style="left:1665px;width:31px">1101</div>
<div class="pg" style="left:1705px"><svg class="abs" style="left:10px;top:7px;width:6px;height:10px" viewBox="0 0 6 10"><path d="M1 1l3.800 4L1 9" fill="none" stroke="#4a4e57" stroke-width="1"/></svg></div>
<div class="abs" style="left:1758px;top:845px;line-height:25px;font-size:12.600px;color:#4a4e57;white-space:nowrap">前往</div>
<div class="abs" style="left:1789px;top:846px;width:40.500px;height:24.300px;border:1px solid #dcdfe8;border-radius:4px;background:#fff;text-align:center;line-height:22.500px;font-size:10.800px;color:#25282e">1</div>
<div class="abs" style="left:1836px;top:845px;line-height:25px;font-size:12.600px;color:#4a4e57;white-space:nowrap">页</div>
</body></html>
